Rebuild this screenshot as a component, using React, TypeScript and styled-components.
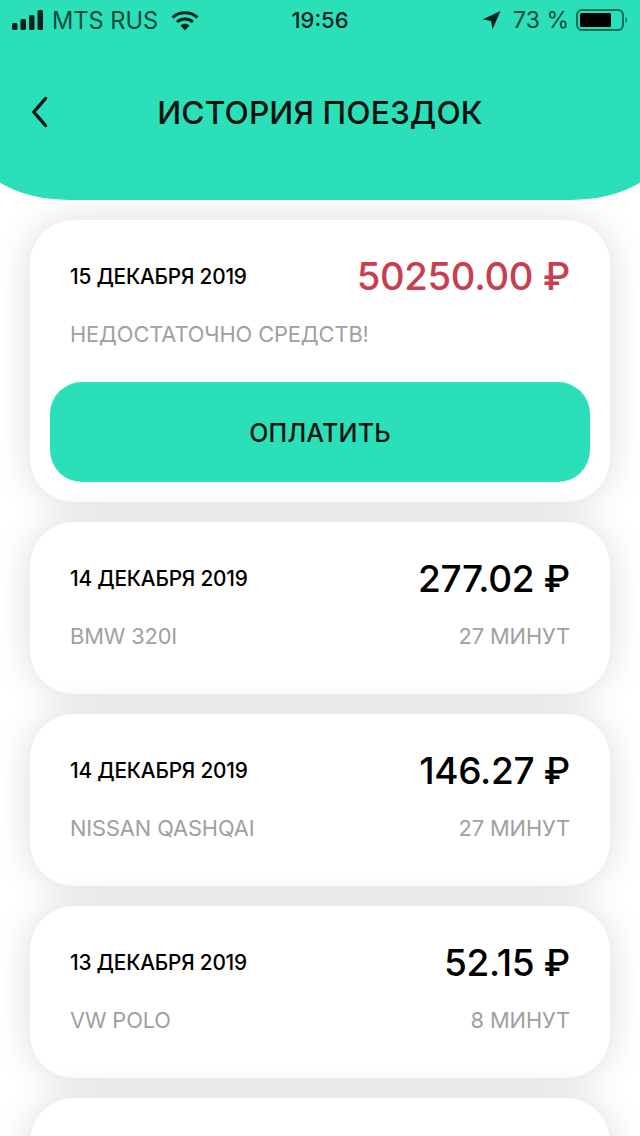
import React from "react";
import styled, { createGlobalStyle } from "styled-components";

const Global = createGlobalStyle`
  html, body { margin: 0; padding: 0; background: #fff; }
  body { width: 640px; height: 1136px; overflow: hidden; font-family: "Inter", "Noto Sans", sans-serif; }
`;

const Page = styled.div`
  width: 640px;
  height: 1136px;
  overflow: hidden;
  background: #fff;
`;

const Header = styled.header`
  height: 200px;
  margin: 0 -30px;
  padding: 0 30px;
  background: #2be0b8;
  border-radius: 0 0 100px 100px / 0 0 60px 60px;
  display: flex;
  flex-direction: column;
`;

const StatusBar = styled.div`
  height: 40px;
  padding: 0 12px;
  display: grid;
  grid-template-columns: 1fr auto 1fr;
  align-items: center;
  font-family: "Inter", sans-serif;
  color: #0c4a3c;
`;

const StatusLeft = styled.div`
  display: flex;
  align-items: center;
  gap: 6px;
`;

const Carrier = styled.span`
  margin-right: 7px;
  font-size: 23.6px;
`;

const Clock = styled.span`
  color: #06231d;
  font-weight: 500;
  font-size: 22px;
`;

const StatusRight = styled.div`
  display: flex;
  align-items: center;
  justify-content: flex-end;
  gap: 7px;
`;

const Battery = styled.span`
  margin-left: 5px;
  font-size: 23px;
`;

const NavBar = styled.div`
  flex: 1;
  position: relative;
  display: flex;
  align-items: center;
  justify-content: center;
  padding-bottom: 14px;
`;

const Back = styled.button`
  position: absolute;
  left: 30px;
  top: 50%;
  margin-top: -24px;
  padding: 0;
  border: 0;
  background: none;
  display: flex;
`;

const Title = styled.h1`
  margin: 0;
  font-family: "Inter", sans-serif;
  font-weight: 500;
  font-size: 31.7px;
  line-height: 40px;
  color: #04120f;
  letter-spacing: 0.1px;
`;

const List = styled.main`
  padding: 20px 30px 0;
  display: flex;
  flex-direction: column;
  gap: 20px;
`;

const Card = styled.section`
  flex: none;
  background: #fff;
  border-radius: 44px;
  box-shadow: 0 0 36px rgba(0, 0, 0, 0.14);
  padding: 36px 0 20px;
  min-height: 172px;
  box-sizing: border-box;
`;

const Row = styled.div`
  padding: 0 40px;
  height: 40px;
  display: flex;
  align-items: center;
  justify-content: space-between;
`;

const SubRow = styled(Row)`
  height: 20px;
  margin-top: 28px;
`;

const DateText = styled.span`
  font-family: "Inter", sans-serif;
  font-weight: 500;
  font-size: 20.8px;
  letter-spacing: -0.2px;
  color: #000;
`;

const Amount = styled.span<{ $danger?: boolean }>`
  font-family: "Inter", sans-serif;
  font-weight: 500;
  font-size: ${(p) => (p.$danger ? "38.2px" : "37px")};
  letter-spacing: -0.3px;
  color: ${(p) => (p.$danger ? "#c8404f" : "#000")};
`;

const Muted = styled.span`
  font-family: "Inter", sans-serif;
  font-size: 21.8px;
  color: #a0a0a0;
  letter-spacing: -0.1px;
`;

const PayButton = styled.button`
  display: block;
  box-sizing: border-box;
  width: 540px;
  height: 100px;
  margin: 38px 20px 0;
  padding: 2px 0 0;
  border: 0;
  border-radius: 32px;
  background: #2be0b8;
  font-family: "Inter", sans-serif;
  font-weight: 500;
  font-size: 25px;
  letter-spacing: 0.2px;
  color: #04120f;
`;

const trips = [
  { date: "14 ДЕКАБРЯ 2019", amount: "277.02 ₽", car: "BMW 320I", time: "27 МИНУТ" },
  { date: "14 ДЕКАБРЯ 2019", amount: "146.27 ₽", car: "NISSAN QASHQAI", time: "27 МИНУТ" },
  { date: "13 ДЕКАБРЯ 2019", amount: "52.15 ₽", car: "VW POLO", time: "8 МИНУТ" },
  { date: "", amount: "", car: "", time: "" },
];

export default function App() {
  return (
    <Page>
      <Global />
      <Header>
        <StatusBar>
          <StatusLeft>
            <svg width="34" height="20" viewBox="0 0 34 20" fill="#06231d">
              <rect x="0" y="13" width="5.5" height="7" rx="1.5" />
              <rect x="8.5" y="9" width="5.5" height="11" rx="1.5" />
              <rect x="17" y="5" width="5.5" height="15" rx="1.5" />
              <rect x="25.5" y="0" width="5.5" height="20" rx="1.5" />
            </svg>
            <Carrier>MTS RUS</Carrier>
            <svg width="28" height="21" viewBox="0 0 28 21" fill="none" stroke="#06231d" strokeWidth="3">
              <path d="M1.5 7.5 C8.5 1 19.5 1 26.5 7.5" />
              <path d="M6 12 C10.5 8 17.5 8 22 12" />
              <path d="M14 20.5 L9.5 15.5 C12 13.3 16 13.3 18.5 15.5 Z" fill="#06231d" stroke="none" />
            </svg>
          </StatusLeft>
          <Clock>19:56</Clock>
          <StatusRight>
            <svg width="19" height="20" viewBox="0 0 19 20" fill="#06231d">
              <path d="M18.5 1 L10.5 19.5 L9 11 L0.5 9.5 Z" />
            </svg>
            <Battery>73 %</Battery>
            <svg width="52" height="24" viewBox="0 0 52 24">
              <rect x="1" y="2" width="46" height="20" rx="5" fill="none" stroke="#0e6f5a" strokeWidth="2" />
              <rect x="4" y="5" width="31" height="14" rx="1.5" fill="#000" />
              <path d="M49.5 9 C51.5 10 51.5 14 49.5 15 Z" fill="#0e6f5a" />
            </svg>
          </StatusRight>
        </StatusBar>
        <NavBar>
          <Back aria-label="Назад">
            <svg width="18" height="32" viewBox="0 0 18 32" fill="none" stroke="#04120f" strokeWidth="3.4" strokeLinecap="round" strokeLinejoin="round">
              <path d="M15.5 2.5 L3.8 16 L15.5 29.5" />
            </svg>
          </Back>
          <Title>ИСТОРИЯ ПОЕЗДОК</Title>
        </NavBar>
      </Header>
      <List>
        <Card>
          <Row>
            <DateText>15 ДЕКАБРЯ 2019</DateText>
            <Amount $danger>50250.00 ₽</Amount>
          </Row>
          <SubRow>
            <Muted>НЕДОСТАТОЧНО СРЕДСТВ!</Muted>
          </SubRow>
          <PayButton>ОПЛАТИТЬ</PayButton>
        </Card>
        {trips.map((t, i) => (
          <Card key={i}>
            <Row>
              <DateText>{t.date}</DateText>
              <Amount>{t.amount}</Amount>
            </Row>
            <SubRow>
              <Muted>{t.car}</Muted>
              <Muted>{t.time}</Muted>
            </SubRow>
          </Card>
        ))}
      </List>
    </Page>
  );
}
